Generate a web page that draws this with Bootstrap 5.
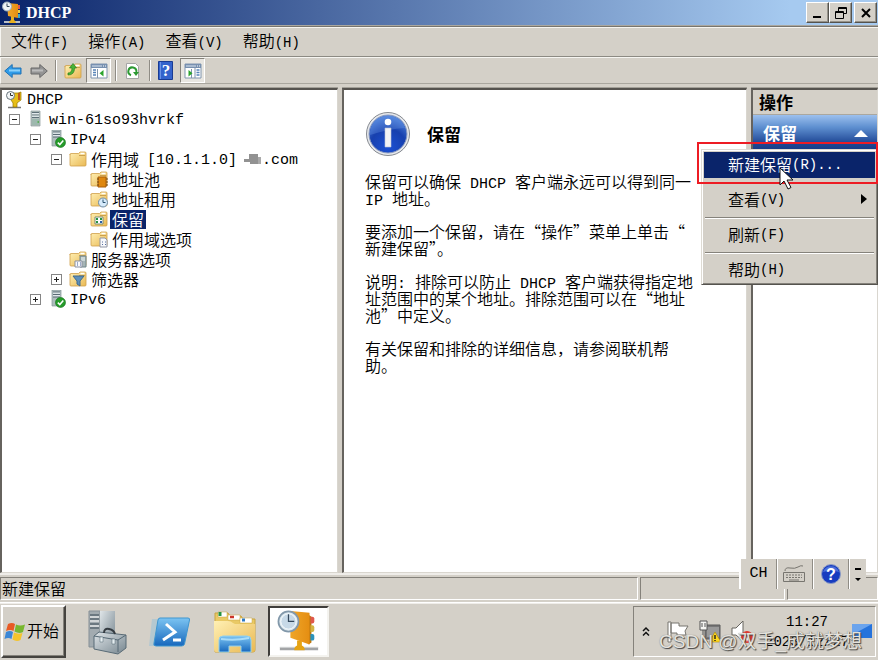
<!DOCTYPE html>
<html lang="zh-CN">
<head>
<meta charset="utf-8">
<meta name="viewport" content="width=device-width, initial-scale=1">
<title>DHCP</title>
<link href="https://cdn.jsdelivr.net/npm/bootstrap@5.3.0/dist/css/bootstrap.min.css" rel="stylesheet">
<style>
:root { --face: #d4d0c8; --navy: #0a246a; --edge: #6e6c66; }
body { font-family: "Noto Sans CJK SC", sans-serif; font-size: 16px; line-height: 20px; color: #000; background: var(--face); font-weight: 350; }
button { font: inherit; color: inherit; padding: 0; border: 0; background: transparent; }
svg { display: block; flex: none; }
.lat { font-family: "Liberation Mono", monospace; font-size: 14px; }
.lat-lg { font-family: "Liberation Mono", monospace; font-size: 15px; }
.titlebar { height: 26px; background: linear-gradient(90deg, var(--navy), #a6caf0 90%); color: #fff; padding: 0 1px 0 2px; border-bottom: 1px solid #aaa79f; }
.titlebar h1 { font: bold 16px/24px "Liberation Serif", serif; }
.capbtn { width: 23px; height: 21px; background: var(--face); border: 1px solid; border-color: #fff #55534e #55534e #fff; box-shadow: inset -1px -1px #96938b; display: flex; align-items: center; justify-content: center; }
.capbtn.apart { margin-left: 2px; }
.menubar { height: 31px; gap: 20px; padding: 0 11px; border-top: 1px solid #77756f; border-bottom: 1px solid #8c8a83; box-shadow: inset 1px 1px #f6f5f1; }
.toolbar { height: 27px; border-top: 1px solid #f6f5f1; border-bottom: 1px solid #a9a69e; border-left: 1px solid #f6f5f1; padding-left: 3px; }
.vsep { width: 2px; height: 21px; margin: 0 7px; background: linear-gradient(90deg, #8f8c85 50%, #fff 50%); }
.vsep.near { margin-left: 4px; }
.pressed { border: 1px solid; border-color: #85827b #fff #fff #85827b; background: #e8e6e1; width: 25px; height: 25px; display: flex; align-items: center; justify-content: center; }
.panes { display: grid; grid-template-columns: minmax(0,338fr) minmax(0,405fr) minmax(0,127fr); gap: 4px; padding-top: 4px; border-bottom: 2px solid #efede9; }
.pane { background: #fff; border-style: solid; border-width: 2px 1px 1px 2px; border-color: #55524e #d9d6cf #d9d6cf #66635e; box-shadow: 0 -1px #a29f97; }
.tree ul { list-style: none; margin: 0; padding: 0 0 0 21px; }
.tree > ul, .tree > ul > li > ul { padding-left: 0; }
.leaf { height: 20px; display: flex; align-items: center; white-space: nowrap; padding: 0 0 2px 25px; }
.leaf.rooty { padding-left: 3px; }
.leaf.twig { padding-left: 7px; }
.leaf svg { margin-right: 4px; }
.leaf .lat-lg { padding-top: 3px; }
.expander { width: 11px; height: 11px; border: 1px solid #858585; background: linear-gradient(#222,#222) center/5px 1px no-repeat, #fff; margin-right: 7px; flex: none; }
.expander.plus { background: linear-gradient(#222,#222) center/5px 1px no-repeat, linear-gradient(#222,#222) center/1px 5px no-repeat, #fff; }
.chosen { background: var(--navy); color: #fff; padding: 0 2px; margin-left: -2px; line-height: 19px; }
.leaf .blot { width: 18px; height: 11px; margin: 0 0 0 7px; }
.article { padding: 21px 0 0 21px; }
.article h2 { font-size: 17px; font-weight: 700; margin: 0; }
.article p { line-height: 17px; margin: 0 0 16px; white-space: nowrap; }
.article p .lat-lg { line-height: 1px; }
.acthead { height: 25px; background: var(--face); border-bottom: 1px solid #aaa79f; padding-left: 6px; font-size: 17px; font-weight: 700; line-height: 24px; }
.actsub { height: 35px; background: linear-gradient(#9cc0ee, #5e8fd0 35%, #1f4795 80%, #173b86); color: #fff; padding: 0 9px 0 10px; font-size: 17px; font-weight: 700; width: 100%; }
.context { position: absolute; z-index: 3; top: 59px; right: -1px; width: 177px; height: 136px; background: var(--face); border: 1px solid; border-color: #dedbd4 #55534e #55534e #dedbd4; box-shadow: inset 1px 1px #fff, inset -1px -1px #85827b; padding: 2px; }
.context button { display: flex; align-items: center; width: 100%; height: 26px; padding: 0 8px 2px 24px; white-space: pre; }
.context .lat { padding-top: 2px; }
.context button.hot { background: var(--navy); color: #fff; }
.context hr { margin: 4px 1px; border: 0; border-top: 1px solid #85827b; border-bottom: 1px solid #fff; height: 2px; opacity: 1; }
.context button + hr { margin-bottom: 3px; }
.callout { position: absolute; z-index: 4; top: 52px; right: -1px; width: 181px; height: 42px; border: 2px solid #ed1c24; pointer-events: none; }
.cursor { position: absolute; z-index: 5; top: 77px; right: 83px; }
.status { display: grid; grid-template-columns: 638fr 145fr 91fr; height: 28px; gap: 2px; padding: 2px 0 2px; border-bottom: 1px solid #fff; }
.cell { border: 1px solid; border-color: #85827b #fff #fff #85827b; padding-left: 1px; line-height: 20px; }
.langbar { position: absolute; z-index: 3; right: 12px; bottom: 71px; height: 30px; background: var(--face); border-left: 2px solid #fff; }
.langbar button { width: 36px; height: 30px; border-right: 1px solid #8f8c85; box-shadow: 1px 0 #fff; display: flex; align-items: center; justify-content: center; }
.langbar button.opts { width: 17px; border: 0; box-shadow: none; }
.taskbar { height: 57px; border-top: 1px solid #efede9; padding: 1px 2px 2px 1px; }
.startbtn { width: 65px; height: 53px; border: 2px solid; border-color: #fff #45433f #45433f #fff; padding-left: 1px; box-shadow: inset -1px -1px #85827b; }
.startbtn span { padding-bottom: 3px; }
.running { width: 61px; height: 51px; margin-left: 10px; background: #fff; border: 2px solid; border-color: #3f3d3a #f4f3ef #f4f3ef #3f3d3a; display: flex; align-items: center; justify-content: center; }
.tray { position: relative; width: 243px; height: 51px; border: 1px solid; border-color: #85827b #fff #fff #85827b; padding: 0 3px 0 8px; }
.clock { line-height: 20px; text-align: center; padding-top: 1px; }
.stamp { position: absolute; right: 13px; bottom: 2px; font: 19px/24px "Liberation Sans", "Noto Sans CJK SC", sans-serif; color: #e4e2dd; text-shadow: 1px 1px 1px #444, 0 0 1px #777; white-space: nowrap; pointer-events: none; }
</style>
<script src="https://cdn.jsdelivr.net/npm/bootstrap@5.3.0/dist/js/bootstrap.bundle.min.js"></script>
</head>
<body>
<svg width="0" height="0" class="position-absolute" aria-hidden="true">
  <defs>
    <linearGradient id="gold" x1="0" y1="0" x2="1" y2="1"><stop offset="0" stop-color="#fff0b4"/><stop offset="1" stop-color="#e9b954"/></linearGradient>
    <linearGradient id="amber" x1="0" y1="0" x2="1" y2="0"><stop offset="0" stop-color="#f0a92c"/><stop offset="1" stop-color="#e58e12"/></linearGradient>
    <linearGradient id="blue" x1="0" y1="0" x2="0" y2="1"><stop offset="0" stop-color="#7cc4f2"/><stop offset="1" stop-color="#1768bd"/></linearGradient>
    <linearGradient id="steel" x1="0" y1="0" x2="1" y2="1"><stop offset="0" stop-color="#dfe5e8"/><stop offset="1" stop-color="#76858e"/></linearGradient>
    <radialGradient id="orb" cx=".5" cy=".85" r=".8"><stop offset="0" stop-color="#1b50d4"/><stop offset=".6" stop-color="#1740ae"/><stop offset="1" stop-color="#4c7fd8"/></radialGradient>
    <symbol id="folder" viewBox="0 0 18 18"><path d="M1 4V15q0 1 1 1h14q1 0 1-1V3q0-1-1-1h-5l-1.500 1.500H2q-1 0-1 1z" fill="url(#gold)" stroke="#cfa04a" stroke-width=".8"/><path d="M11.500 3.500h4" stroke="#fff" stroke-width="1.500"/><path d="M10 5.500h6" stroke="#cda04c"/></symbol>
    <symbol id="server" viewBox="0 0 18 18"><path d="M4 1h9v15H4z" fill="#b4c0bf" stroke="#8b9999" stroke-width=".7"/><path d="M5 2.500h7M5 5h7M5 7.500h7" stroke="#5f7078"/><path d="M5 3.700h7M5 6.200h7" stroke="#edf3f5"/><path d="M5 9h7v6H5z" fill="#9db8ae"/><path d="M10.500 12h1.500" stroke="#49aa42" stroke-width="1.500"/></symbol>
    <symbol id="serverok" viewBox="0 0 18 18"><path d="M4 0h9v16H4z" fill="#aebcbd" stroke="#84959a" stroke-width=".7"/><path d="M5 2h7M5 4.500h7M5 7h7" stroke="#596b75"/><path d="M5 3.200h7M5 5.700h7" stroke="#edf3f5"/><circle cx="12.500" cy="12.500" r="5" fill="#269b2a" stroke="#117018" stroke-width=".6"/><path d="m9.800 12.600 2 2 3.500-4.200" fill="none" stroke="#fff" stroke-width="1.500"/></symbol>
    <symbol id="book" viewBox="0 0 46 46"><path d="M3 39h40v3H3z" fill="#a2a4a6"/><path d="M3 39h40" stroke="#d2d4d5"/><path d="M18 42q0-4 3-5v-5h5v5q3 1 3 5z" fill="#e5a313"/><path d="m33 5 3 2v27l-3 2z" fill="#bd760d"/><path d="M35 7h2q2 0 2 2v3q0 2-2 2h-2z" fill="#e0584c"/><path d="M35 16h2q2 0 2 2v3q0 2-2 2h-2z" fill="#d4b542"/><path d="M35 25h2q2 0 2 2v3q0 2-2 2h-2z" fill="#2b93bc"/><path d="m14 1 20 2v33l-20-7V22h-3l3-3z" fill="url(#amber)"/><circle cx="12" cy="12" r="10.500" fill="#dce8ef" stroke="#8298aa" stroke-width="1.800"/><circle cx="12" cy="12" r="8" fill="#c7d9e7" stroke="#f8fbfc"/><path d="M12 4.500V12h6" fill="none" stroke="#33475b" stroke-width="1.300"/></symbol>
    <symbol id="panel" viewBox="0 0 18 18"><path d="M1 2h16v14H1z" fill="#fff" stroke="#8095ae"/><path d="M1 2h16v4H1z" fill="#7790b0"/><path d="M2 4h10" stroke="#dce5f0"/><path d="M13 4h3" stroke="#fff" stroke-dasharray="1 1"/><path d="M7.500 7v9" stroke="#8095ae"/></symbol>
  </defs>
</svg>
<div class="d-flex flex-column min-vh-100 position-relative overflow-hidden">
  <header class="titlebar d-flex align-items-center">
    <svg width="20" height="24" viewBox="0 0 20 24"><path d="M2 20h16v2H2z" fill="#b9bfc6"/><path d="M7 22q0-2 2-3v-4h3v4q2 1 2 3z" fill="#e8b020"/><path d="m5 2 11 1v14L6 15z" fill="url(#amber)"/><path d="M17 4v4" stroke="#e0584c" stroke-width="2"/><path d="M17 9v3" stroke="#e6cf4e" stroke-width="2"/><path d="M17 13v4" stroke="#3aa6c8" stroke-width="2"/><circle cx="5" cy="5.500" r="4.500" fill="#eef3f6" stroke="#9aacba"/><path d="M5 2.500v3h2.500" fill="none" stroke="#33475b"/></svg>
    <h1 class="m-0 ms-1 flex-grow-1">DHCP</h1>
    <button class="capbtn" aria-label="最小化"><svg width="13" height="13"><path d="M2 10h8v2H2z"/></svg></button>
    <button class="capbtn" aria-label="还原"><svg width="14" height="14" fill="none" stroke="#000"><path d="M4.500 5V1.500h8v6H10M4 2.500h9M1.500 5.500h8v7h-8zM1 6.500h9"/></svg></button>
    <button class="capbtn apart" aria-label="关闭"><svg width="12" height="12"><path d="m2 2 8 8m0-8-8 8" stroke="#000" stroke-width="2"/></svg></button>
  </header>
  <nav class="menubar d-flex align-items-center">
    <button>文件<span class="lat">(F)</span></button><button>操作<span class="lat">(A)</span></button><button>查看<span class="lat">(V)</span></button><button>帮助<span class="lat">(H)</span></button>
  </nav>
  <div class="toolbar d-flex align-items-center">
    <button aria-label="后退"><svg width="18" height="18"><path d="m.7 9 7.500-6.500V6H17v6H8.200v3.500z" fill="#2f9be8" stroke="#2071b3"/><path d="M5 8.500h11" stroke="#8ad0fa" stroke-width="2"/></svg></button>
    <button class="ms-2" aria-label="前进"><svg width="18" height="18"><path d="M17.300 9 9.800 2.500V6H1v6h8.800v3.500z" fill="#949494" stroke="#686868"/><path d="M2 8.500h11" stroke="#bbb" stroke-width="2"/></svg></button>
    <span class="vsep"></span>
    <button aria-label="上一级"><svg width="18" height="18"><use href="#folder"/><path d="M4 11q4 0 4-5H5.500L9 1.500 12.500 6H10.500q0 7-6.500 7z" fill="#49b536" stroke="#287d20" stroke-width=".7"/></svg></button>
    <button class="pressed ms-1" aria-label="显示控制台树"><svg width="18" height="18"><use href="#panel"/><path d="M3 8h3M3 10.500h3M3 13h3" stroke="#5683b8" stroke-width="1.500"/><path d="M13.500 8v6.500L9.500 11.200z" fill="#2ba42c"/></svg></button>
    <span class="vsep near"></span>
    <button aria-label="刷新"><svg width="18" height="18"><path d="M2.500 1.500h9l3 3v12h-12z" fill="#fff" stroke="#a5a5a5"/><path d="M7 13.200A4 4 0 1 1 12.300 10" fill="none" stroke="#2d9932" stroke-width="2"/><path d="M9 10h6l-3 4z" fill="#2d9932"/></svg></button>
    <span class="vsep"></span>
    <button aria-label="帮助"><svg width="18" height="19"><path d="M.5.500h14v18H.5z" fill="#3463cc" stroke="#193b93"/><path d="M2.500 1v17" stroke="#6a91e5"/><text x="8" y="15" text-anchor="middle" fill="#fff" font-family="Liberation Serif, serif" font-size="17" font-weight="700">?</text></svg></button>
    <button class="pressed ms-1" aria-label="显示操作窗格"><svg width="18" height="18"><use href="#panel"/><path d="M11 6v10" stroke="#8095ae"/><path d="M12.500 8h3M12.500 10.500h3M12.500 13h3" stroke="#5683b8" stroke-width="1.500"/><path d="M4.500 8v6.500l4-3.300z" fill="#2ba42c"/></svg></button>
  </div>
  <main class="panes flex-grow-1">
    <section class="pane tree">
      <ul><li><div class="leaf rooty"><svg width="18" height="19" viewBox="0 0 18 19"><path d="M3 17.500h13" stroke="#777" stroke-width="1.500"/><path d="M8 17v-4L6 10V3h7l3-1v8l-4 3v4z" fill="#e6be17" stroke="#957600" stroke-width=".7"/><path d="M14 3v7" stroke="#b23c20" stroke-width="1.500"/><circle cx="5.500" cy="5.500" r="4" fill="#f1f4f5" stroke="#66727a"/><path d="M5.500 3v2.500H8" fill="none" stroke="#333"/></svg><span class="lat-lg">DHCP</span></div>
        <ul><li><div class="leaf twig"><button class="expander" aria-label="折叠"></button><svg width="18" height="18"><use href="#server"/></svg><span class="lat-lg">win-61so93hvrkf</span></div>
          <ul><li><div class="leaf twig"><button class="expander" aria-label="折叠"></button><svg width="18" height="18"><use href="#serverok"/></svg><span class="lat-lg">IPv4</span></div>
            <ul><li><div class="leaf twig"><button class="expander" aria-label="折叠"></button><svg width="18" height="18"><use href="#folder"/></svg><span>作用域</span><span class="lat-lg ms-2">[10.1.1.0]</span><svg class="blot" viewBox="0 0 18 11"><path d="M0 5h5V0h9v10H6V8H0z" fill="#929292"/><path d="M14 3h3v7h-3z" fill="#aaa"/></svg><span class="lat-lg">.com</span></div>
              <ul>
                <li><div class="leaf"><svg width="18" height="18"><use href="#folder"/><path d="M8 7h8v10H8z" fill="#df880f" stroke="#a95f0b"/><path d="M7 9h2M7 12h2M7 15h2M16 9h2M16 12h2M16 15h2" stroke="#704612"/></svg>地址池</div></li>
                <li><div class="leaf"><svg width="18" height="18"><use href="#folder"/><circle cx="13" cy="12.500" r="4.500" fill="#d6eafa" stroke="#6e8ba5"/><path d="M13 9.500v3h2.500" fill="none" stroke="#2b526f"/></svg>地址租用</div></li>
                <li><div class="leaf"><svg width="18" height="18"><use href="#folder"/><path d="M5 7h8v7H5z" fill="#fff" stroke="#7b8d79"/><path d="M6 9h2M10 9h2M6 12h2" stroke="#249444" stroke-width="2"/><path d="M10 12h2" stroke="#295fa8" stroke-width="2"/></svg><span class="chosen">保留</span></div></li>
                <li><div class="leaf"><svg width="18" height="18"><use href="#folder"/><path d="M10 8h5l2 2v7h-7z" fill="#f7f8fb" stroke="#9196a5"/><path d="M12 12h1M15 12h1M12 14.500h1M15 14.500h1" stroke="#5870a0"/></svg>作用域选项</div></li>
              </ul></li>
              <li><div class="leaf"><svg width="18" height="18"><use href="#folder"/><path d="M11 6h6v11h-6z" fill="#a6b5b6" stroke="#71868b"/><path d="M12 8h4M12 10h4" stroke="#eff6f6"/><path d="M6 11h7v6H6z" fill="#f8f8fb" stroke="#8b91a1"/><path d="M8 13h1M11 13h1M8 15h1M11 15h1" stroke="#405e98"/></svg>服务器选项</div></li>
              <li><div class="leaf twig"><button class="expander plus" aria-label="展开"></button><svg width="18" height="18"><use href="#folder"/><path d="M4 6h11l-4 5v5l-3-2v-3z" fill="#5d8fba" stroke="#416a8d"/></svg>筛选器</div></li>
            </ul></li>
            <li><div class="leaf twig"><button class="expander plus" aria-label="展开"></button><svg width="18" height="18"><use href="#serverok"/></svg><span class="lat-lg">IPv6</span></div></li>
          </ul></li></ul></li></ul>
    </section>
    <section class="pane article">
      <div class="d-flex align-items-center mb-3">
        <svg width="46" height="46" viewBox="0 0 46 46"><circle cx="23" cy="23" r="21.500" fill="#e7e9ec" stroke="#858990"/><circle cx="23" cy="23" r="19" fill="url(#orb)" stroke="#8d9cc0"/><path d="M5 24A18 18 0 0 1 40 17Q23 18 5 24z" fill="#72a0ea" opacity=".3"/><circle cx="23" cy="11" r="3.300" fill="#fff"/><path d="M20 17h6v19h-6z" fill="#f2f3f5" stroke="#b8c2d7" stroke-width=".6"/></svg>
        <h2 class="ms-3">保留</h2>
      </div>
      <p>保留可以确保<span class="lat-lg"> DHCP </span>客户端永远可以得到同一<br><span class="lat-lg">IP </span>地址。</p>
      <p>要添加一个保留，请在“操作”菜单上单击“<br>新建保留”。</p>
      <p>说明<span class="lat-lg">: </span>排除可以防止<span class="lat-lg"> DHCP </span>客户端获得指定地<br>址范围中的某个地址。排除范围可以在“地址<br>池”中定义。</p>
      <p>有关保留和排除的详细信息，请参阅联机帮<br>助。</p>
    </section>
    <aside class="pane position-relative">
      <div class="acthead">操作</div>
      <button class="actsub d-flex align-items-center justify-content-between"><span>保留</span><svg width="14" height="8"><path d="M0 8 7 1l7 7z" fill="#fff"/></svg></button>
      <div class="context" role="menu">
        <button class="hot">新建保留<span class="lat">(R)...</span></button><hr>
        <button>查看<span class="lat flex-grow-1 text-start">(V)</span><svg width="6" height="10"><path d="m0 0 6 5-6 5z"/></svg></button><hr>
        <button>刷新<span class="lat">(F)</span></button><hr>
        <button>帮助<span class="lat">(H)</span></button>
      </div>
      <div class="callout"></div>
      <svg class="cursor" width="15" height="24" viewBox="0 0 15 24"><path d="M1 1v17l4-4 4 8 3-1.500-4-7.500h6z" fill="#fff" stroke="#111"/></svg>
    </aside>
  </main>
  <footer class="status"><div class="cell">新建保留</div><div class="cell"></div><div class="cell"></div></footer>
  <div class="langbar d-flex">
    <button class="lat-lg">CH</button>
    <button aria-label="键盘"><svg width="25" height="20" fill="none" stroke="#77756f"><path d="M3 7q0-4 5-3t8-1 5-1M1.500 8.500h21v9h-21z"/><path d="M4 11h16M4 13.500h16" stroke-dasharray="2 1"/><path d="M7 16h10"/></svg></button>
    <button aria-label="帮助"><svg width="22" height="22"><circle cx="11" cy="11" r="9.500" fill="#173cc0" stroke="#8b9bc5"/><path d="M3 9a8.500 8.500 0 0 1 16 0Q11 6 3 9z" fill="#6f92ea" opacity=".6"/><text x="11" y="17" text-anchor="middle" font-family="Liberation Sans, sans-serif" font-weight="700" font-size="16" fill="#fff">?</text></svg></button>
    <button class="opts" aria-label="选项"><svg width="10" height="20"><path d="M2 4h6v2H2zM2 14h6l-3 3z"/></svg></button>
  </div>
  <div class="taskbar d-flex align-items-center">
    <button class="startbtn d-flex align-items-center"><svg width="23" height="22" viewBox="0 0 23 22"><path d="M4 3q4-2 7 0L9.500 10q-3-2-7.500 0z" fill="#e85a24"/><path d="M12 3.500q4 2 9 0L19 11q-4 2-8.500-.5z" fill="#78b72e"/><path d="M2 11q4-2 7 0l-1.500 7q-3-2-7 0z" fill="#3b87d6"/><path d="M10 11.500q4 2 8.500.5l-2 7q-4 2-8-.5z" fill="#f5c42b"/></svg><span>开始</span></button>
    <div class="d-flex align-items-center flex-grow-1">
      <button class="ms-3 ps-1" aria-label="服务器管理器"><svg width="46" height="46" viewBox="0 0 46 46"><path d="M3 2h11v36H3z" fill="#a2abb0" stroke="#858f96"/><path d="M14 2h15v36H14z" fill="url(#steel)"/><path d="M4 6h9M4 10h9M4 15h9M4 19h9" stroke="#596872" stroke-width="1.500"/><path d="M4 8h9M4 12h9M4 17h9" stroke="#fff"/><path d="m8 27 5-4 27 3v13l-8 6-24-5z" fill="url(#steel)" stroke="#596b76"/><path d="m8 27 24 4 8-5M32 31v12" fill="none" stroke="#566975"/><path d="M18 24q0-5 5-4t6 5" fill="none" stroke="#343b41" stroke-width="2"/><path d="M14 28h3v5h-3zM26 30h3v5h-3z" fill="#e5edf0" stroke="#536570" stroke-width=".5"/></svg></button>
      <button class="ms-3" aria-label="PowerShell"><svg width="44" height="38" viewBox="0 0 44 38"><path d="M4 6h12l-4 27H1zM10 5h12l-4 28H7z" fill="#69b6e4" opacity=".3"/><path d="M12 5h28q2 0 1.500 2l-5 24q-.5 2-3 2H8q-3 0-2-3l4-23q.5-2 2-2z" fill="url(#blue)" stroke="#3f96cf"/><path d="m18 11 9 8-12 8M25 27h8" fill="none" stroke="#fff" stroke-width="3"/></svg></button>
      <button class="ms-3 ps-1" aria-label="资源管理器"><svg width="46" height="46" viewBox="0 0 46 46"><path d="M3 4h13l2 3h11l2 3h12v31q0 2-2 2H3z" fill="#e9c965" stroke="#c9a443"/><path d="M6 3h9v5H6z" fill="#fff" stroke="#c9a443" stroke-width=".5"/><path d="M16 6h12v5H16z" fill="#fff" stroke="#c9a443" stroke-width=".5"/><path d="M28 9h12v5H28z" fill="#fff" stroke="#c9a443" stroke-width=".5"/><path d="M8 3v4" stroke="#249342" stroke-width="3"/><path d="M18 8h4" stroke="#cc3529" stroke-width="2.500"/><path d="M30 11h3" stroke="#2d79c4" stroke-width="3"/><path d="M2 12h14q3 0 5 2l2 1h20v25q0 3-3 3H4q-2 0-2-3z" fill="url(#gold)"/><path d="M7 43V31q0-4 4-4h24q4 0 4 4v12H29v-6H17v6z" fill="url(#blue)" stroke="#93d1ef"/><path d="M9 30q14 2 28-1" stroke="#c6efff" stroke-width="2" fill="none" opacity=".7"/></svg></button>
      <button class="running" aria-label="DHCP"><svg width="46" height="44"><use href="#book"/></svg></button>
    </div>
    <div class="tray d-flex align-items-center">
      <button aria-label="显示隐藏的图标"><svg width="8" height="11" fill="none" stroke="#111" stroke-width="1.500"><path d="m1 5 3-3 3 3M1 9.500l3-3 3 3"/></svg></button>
      <svg class="ms-3" width="24" height="24" viewBox="0 0 24 24"><path d="M2 22V2h3v20zM5 3h8v3h9l-3 5 1 4h-9v-2H5z" fill="#fff" stroke="#77756f"/></svg>
      <svg class="ms-2" width="24" height="24" viewBox="0 0 24 24"><path d="M7 5h15v14H7z" fill="#777" stroke="#5b5b5b"/><path d="M9 7h12v10H9z" fill="#9a9a9a"/><path d="M2 1h7v9H2z" fill="#f5f5f2" stroke="#555"/><path d="M4 3v4M7 3v4M5 10v12h5" fill="none" stroke="#555"/><path d="m17 12 6 10H11z" fill="#ffd820" stroke="#ad8700" stroke-width=".6"/><path d="M17 15v4M17 20v1" stroke="#111" stroke-width="1.300"/></svg>
      <svg class="ms-2" width="24" height="24" viewBox="0 0 24 24"><path d="M2 8h4l7-7v20l-7-6H2z" fill="#fff" stroke="#66645f"/><circle cx="17" cy="17" r="6" fill="#e2352a"/><path d="m14 13 3 7 3-7" stroke="#fff" stroke-width="1.500" fill="none"/></svg>
      <div class="clock lat ms-2 flex-grow-1">11:27<br>2023/12/27</div>
      <button aria-label="显示桌面"><svg width="20" height="17"><path d="M0 1h20v14H0z" fill="#2673dc"/><path d="M0 1h20L0 12z" fill="#6ba4ed"/></svg></button>
      <div class="stamp">CSDN @双手_成就梦想</div>
    </div>
  </div>
</div>
</body>
</html>
